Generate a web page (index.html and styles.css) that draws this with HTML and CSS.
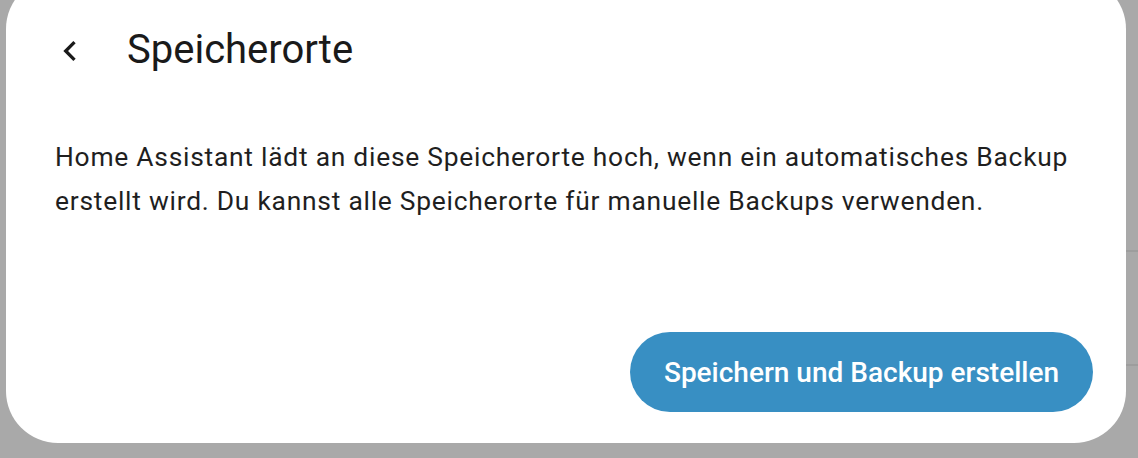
FILE: index.html
```html
<!DOCTYPE html>
<html lang="de">
<head>
    <meta charset="UTF-8">
    <meta name="viewport" content="width=device-width, initial-scale=1.0">
    <title>Speicherorte</title>
    <link rel="stylesheet" href="styles.css">
</head>
<body>
    <div class="dialog">
        <header class="dialog-header">
            <button class="back-button" type="button" aria-label="Zurück">
                <svg viewBox="0 0 24 24" width="40" height="40">
                    <path d="M15.41,16.58L10.83,12L15.41,7.41L14,6L8,12L14,18L15.41,16.58Z" fill="currentColor"/>
                </svg>
            </button>
            <h1 class="dialog-title">Speicherorte</h1>
        </header>

        <div class="dialog-content">
            <p>Home Assistant lädt an diese Speicherorte hoch, wenn ein automatisches Backup erstellt wird. Du kannst alle Speicherorte für manuelle Backups verwenden.</p>
        </div>

        <div class="dialog-actions">
            <button class="primary-button" type="button">Speichern und Backup erstellen</button>
        </div>
    </div>
</body>
</html>
```

FILE: styles.css
```css
body {
    margin: 0;
    height: 458px;
    overflow: hidden;
    font-family: Roboto, "Liberation Sans", sans-serif;
    background-color: #a9a9a9;
    background-image:
        linear-gradient(#9d9d9d, #9d9d9d),
        linear-gradient(#9d9d9d, #9d9d9d);
    background-repeat: no-repeat;
    background-size: 30px 2px, 30px 2px;
    background-position: right 0 top 250px, right 0 top 364px;
}

.dialog {
    margin: -23px 0 0 6px;
    width: 1120px;
    height: 466px;
    box-sizing: border-box;
    background: #fff;
    border-radius: 52px;
    display: flex;
    flex-direction: column;
    padding: 23px 33px 31px 0;
}

.dialog-header {
    display: flex;
    align-items: center;
    height: 102px;
    padding-left: 44px;
}

.back-button {
    background: none;
    border: none;
    padding: 0;
    width: 40px;
    height: 40px;
    color: #1a1a1a;
    display: flex;
    cursor: pointer;
}

.dialog-title {
    margin: 0 0 2px 37px;
    font-size: 40px;
    line-height: 1;
    font-weight: 400;
    color: #1a1a1a;
}

.dialog-content {
    padding-left: 49px;
    flex: 1;
}

.dialog-content p {
    margin: 33px 0 0;
    font-size: 26.4px;
    letter-spacing: 0.75px;
    line-height: 44px;
    color: #1f1f1f;
}

.dialog-actions {
    display: flex;
    justify-content: flex-end;
}

.primary-button {
    background-color: #388fc3;
    color: #fff;
    border: none;
    border-radius: 40px;
    height: 80px;
    padding: 0 34px;
    font-family: inherit;
    font-size: 28px;
    font-weight: 500;
    cursor: pointer;
}
```
